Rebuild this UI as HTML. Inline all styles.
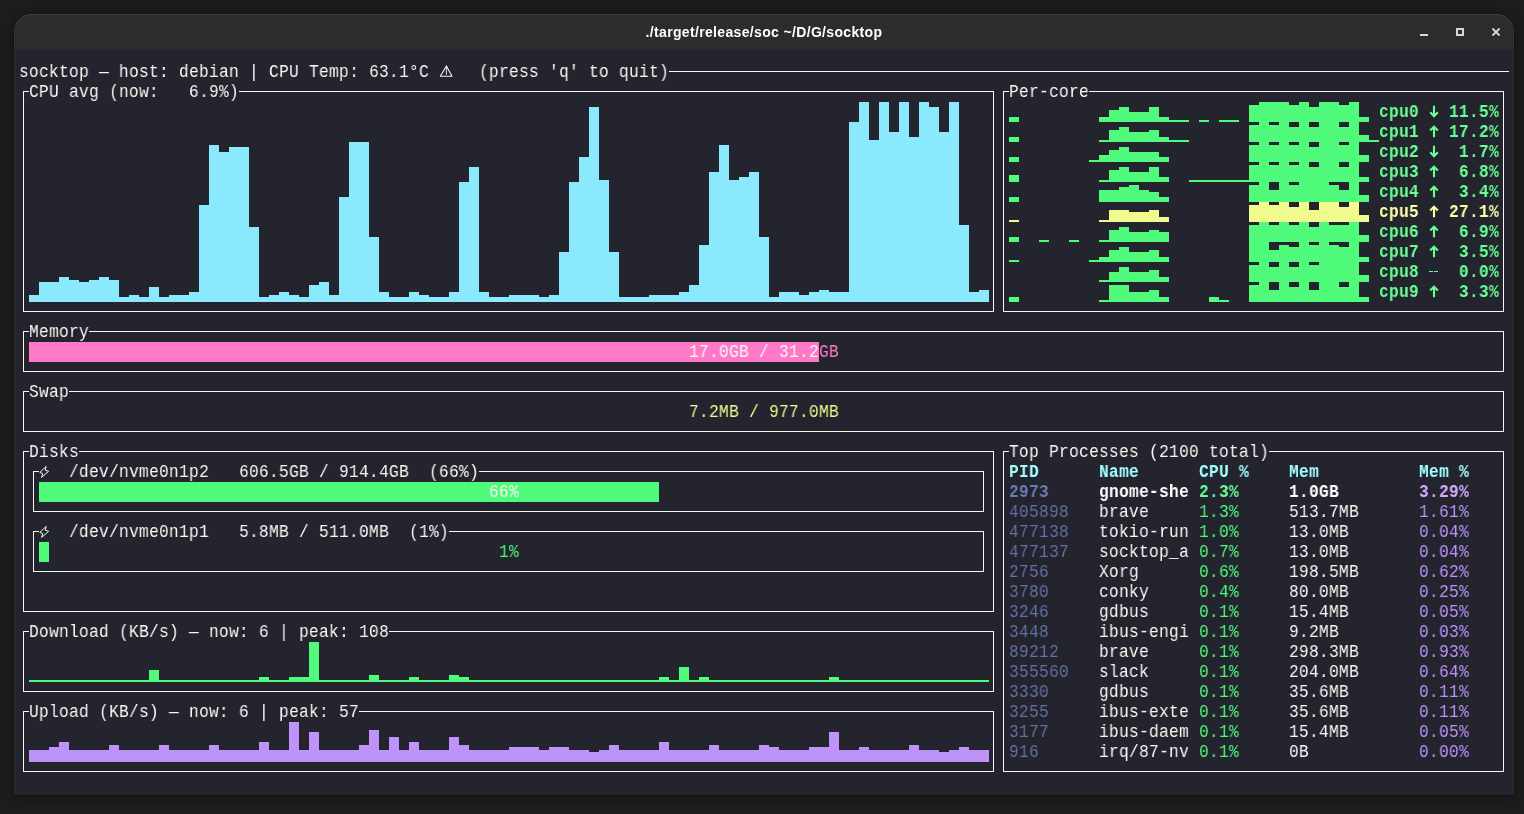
<!DOCTYPE html>
<html><head><meta charset="utf-8"><style>
html,body{margin:0;padding:0;}
body{width:1524px;height:814px;background:#1d1d1d;position:relative;overflow:hidden;}
#win{position:absolute;left:14px;top:14px;width:1500px;height:781px;border-radius:18px 18px 0 0;overflow:hidden;background:#23242e;box-shadow:0 0 0 1px rgba(0,0,0,0.18),0 2px 14px rgba(0,0,0,0.35);}
#edge{position:absolute;left:14px;top:14px;width:1500px;height:781px;border-radius:18px 18px 0 0;box-shadow:inset 1px 0 0 rgba(255,255,255,0.035),inset -1px 0 0 rgba(255,255,255,0.035),inset 0 1px 0 rgba(255,255,255,0.09);}
#tb{position:absolute;left:0;top:0;width:1500px;height:36px;background:#2c2c2c;}
#title{position:absolute;left:0;top:0;width:1500px;height:36px;line-height:36px;text-align:center;font-family:"Liberation Sans",sans-serif;font-weight:bold;font-size:14px;letter-spacing:0.34px;color:#ffffff;will-change:transform;}
.t{position:absolute;height:20px;line-height:20px;white-space:pre;font-family:"Liberation Mono",monospace;font-size:18px;letter-spacing:0.3094px;transform:translateY(0px) scaleX(0.9);transform-origin:0 0;will-change:transform;}
.b{font-weight:bold;}
svg{position:absolute;left:0;top:0;}
</style></head><body>
<div id="win"><div id="tb"><div id="title">./target/release/soc ~/D/G/socktop</div></div></div><div id="edge"></div>

<svg width="1524" height="814" shape-rendering="crispEdges"><rect x="1420" y="34" width="8" height="2" fill="#d6d6d6"/><rect x="1457" y="29" width="6" height="6" fill="none" stroke="#d6d6d6" stroke-width="2"/><g shape-rendering="geometricPrecision"><path d="M1492.5 28.5 L1499.5 35.5 M1499.5 28.5 L1492.5 35.5" stroke="#d6d6d6" stroke-width="1.8"/></g><rect x="669" y="71" width="840" height="1" fill="#f8f8f2"/><rect x="23" y="91" width="6" height="1" fill="#f8f8f2"/><rect x="239" y="91" width="755" height="1" fill="#f8f8f2"/><rect x="23" y="311" width="971" height="1" fill="#f8f8f2"/><rect x="23" y="91" width="1" height="221" fill="#f8f8f2"/><rect x="993" y="91" width="1" height="221" fill="#f8f8f2"/><rect x="29" y="295" width="10" height="7" fill="#8be9fd"/><rect x="39" y="282" width="10" height="20" fill="#8be9fd"/><rect x="49" y="282" width="10" height="20" fill="#8be9fd"/><rect x="59" y="277" width="10" height="25" fill="#8be9fd"/><rect x="69" y="280" width="10" height="22" fill="#8be9fd"/><rect x="79" y="282" width="10" height="20" fill="#8be9fd"/><rect x="89" y="280" width="10" height="22" fill="#8be9fd"/><rect x="99" y="277" width="10" height="25" fill="#8be9fd"/><rect x="109" y="280" width="10" height="22" fill="#8be9fd"/><rect x="119" y="297" width="10" height="5" fill="#8be9fd"/><rect x="129" y="295" width="10" height="7" fill="#8be9fd"/><rect x="139" y="297" width="10" height="5" fill="#8be9fd"/><rect x="149" y="287" width="10" height="15" fill="#8be9fd"/><rect x="159" y="297" width="10" height="5" fill="#8be9fd"/><rect x="169" y="295" width="10" height="7" fill="#8be9fd"/><rect x="179" y="295" width="10" height="7" fill="#8be9fd"/><rect x="189" y="292" width="10" height="10" fill="#8be9fd"/><rect x="199" y="205" width="10" height="97" fill="#8be9fd"/><rect x="209" y="145" width="10" height="157" fill="#8be9fd"/><rect x="219" y="152" width="10" height="150" fill="#8be9fd"/><rect x="229" y="147" width="10" height="155" fill="#8be9fd"/><rect x="239" y="147" width="10" height="155" fill="#8be9fd"/><rect x="249" y="227" width="10" height="75" fill="#8be9fd"/><rect x="259" y="297" width="10" height="5" fill="#8be9fd"/><rect x="269" y="295" width="10" height="7" fill="#8be9fd"/><rect x="279" y="292" width="10" height="10" fill="#8be9fd"/><rect x="289" y="295" width="10" height="7" fill="#8be9fd"/><rect x="299" y="297" width="10" height="5" fill="#8be9fd"/><rect x="309" y="285" width="10" height="17" fill="#8be9fd"/><rect x="319" y="282" width="10" height="20" fill="#8be9fd"/><rect x="329" y="295" width="10" height="7" fill="#8be9fd"/><rect x="339" y="197" width="10" height="105" fill="#8be9fd"/><rect x="349" y="142" width="10" height="160" fill="#8be9fd"/><rect x="359" y="142" width="10" height="160" fill="#8be9fd"/><rect x="369" y="237" width="10" height="65" fill="#8be9fd"/><rect x="379" y="292" width="10" height="10" fill="#8be9fd"/><rect x="389" y="297" width="10" height="5" fill="#8be9fd"/><rect x="399" y="297" width="10" height="5" fill="#8be9fd"/><rect x="409" y="292" width="10" height="10" fill="#8be9fd"/><rect x="419" y="295" width="10" height="7" fill="#8be9fd"/><rect x="429" y="297" width="10" height="5" fill="#8be9fd"/><rect x="439" y="297" width="10" height="5" fill="#8be9fd"/><rect x="449" y="292" width="10" height="10" fill="#8be9fd"/><rect x="459" y="182" width="10" height="120" fill="#8be9fd"/><rect x="469" y="167" width="10" height="135" fill="#8be9fd"/><rect x="479" y="292" width="10" height="10" fill="#8be9fd"/><rect x="489" y="297" width="10" height="5" fill="#8be9fd"/><rect x="499" y="297" width="10" height="5" fill="#8be9fd"/><rect x="509" y="295" width="10" height="7" fill="#8be9fd"/><rect x="519" y="295" width="10" height="7" fill="#8be9fd"/><rect x="529" y="295" width="10" height="7" fill="#8be9fd"/><rect x="539" y="297" width="10" height="5" fill="#8be9fd"/><rect x="549" y="295" width="10" height="7" fill="#8be9fd"/><rect x="559" y="252" width="10" height="50" fill="#8be9fd"/><rect x="569" y="182" width="10" height="120" fill="#8be9fd"/><rect x="579" y="157" width="10" height="145" fill="#8be9fd"/><rect x="589" y="107" width="10" height="195" fill="#8be9fd"/><rect x="599" y="180" width="10" height="122" fill="#8be9fd"/><rect x="609" y="252" width="10" height="50" fill="#8be9fd"/><rect x="619" y="297" width="10" height="5" fill="#8be9fd"/><rect x="629" y="297" width="10" height="5" fill="#8be9fd"/><rect x="639" y="297" width="10" height="5" fill="#8be9fd"/><rect x="649" y="295" width="10" height="7" fill="#8be9fd"/><rect x="659" y="295" width="10" height="7" fill="#8be9fd"/><rect x="669" y="295" width="10" height="7" fill="#8be9fd"/><rect x="679" y="292" width="10" height="10" fill="#8be9fd"/><rect x="689" y="285" width="10" height="17" fill="#8be9fd"/><rect x="699" y="245" width="10" height="57" fill="#8be9fd"/><rect x="709" y="172" width="10" height="130" fill="#8be9fd"/><rect x="719" y="145" width="10" height="157" fill="#8be9fd"/><rect x="729" y="180" width="10" height="122" fill="#8be9fd"/><rect x="739" y="177" width="10" height="125" fill="#8be9fd"/><rect x="749" y="172" width="10" height="130" fill="#8be9fd"/><rect x="759" y="237" width="10" height="65" fill="#8be9fd"/><rect x="769" y="297" width="10" height="5" fill="#8be9fd"/><rect x="779" y="292" width="10" height="10" fill="#8be9fd"/><rect x="789" y="292" width="10" height="10" fill="#8be9fd"/><rect x="799" y="295" width="10" height="7" fill="#8be9fd"/><rect x="809" y="292" width="10" height="10" fill="#8be9fd"/><rect x="819" y="290" width="10" height="12" fill="#8be9fd"/><rect x="829" y="292" width="10" height="10" fill="#8be9fd"/><rect x="839" y="292" width="10" height="10" fill="#8be9fd"/><rect x="849" y="122" width="10" height="180" fill="#8be9fd"/><rect x="859" y="102" width="10" height="200" fill="#8be9fd"/><rect x="869" y="140" width="10" height="162" fill="#8be9fd"/><rect x="879" y="102" width="10" height="200" fill="#8be9fd"/><rect x="889" y="132" width="10" height="170" fill="#8be9fd"/><rect x="899" y="102" width="10" height="200" fill="#8be9fd"/><rect x="909" y="137" width="10" height="165" fill="#8be9fd"/><rect x="919" y="102" width="10" height="200" fill="#8be9fd"/><rect x="929" y="107" width="10" height="195" fill="#8be9fd"/><rect x="939" y="132" width="10" height="170" fill="#8be9fd"/><rect x="949" y="102" width="10" height="200" fill="#8be9fd"/><rect x="959" y="225" width="10" height="77" fill="#8be9fd"/><rect x="969" y="292" width="10" height="10" fill="#8be9fd"/><rect x="979" y="290" width="10" height="12" fill="#8be9fd"/><rect x="1003" y="91" width="6" height="1" fill="#f8f8f2"/><rect x="1089" y="91" width="415" height="1" fill="#f8f8f2"/><rect x="1003" y="311" width="501" height="1" fill="#f8f8f2"/><rect x="1003" y="91" width="1" height="221" fill="#f8f8f2"/><rect x="1503" y="91" width="1" height="221" fill="#f8f8f2"/><rect x="1009" y="117" width="10" height="5" fill="#50fa7b"/><rect x="1099" y="117" width="10" height="5" fill="#50fa7b"/><rect x="1109" y="110" width="10" height="12" fill="#50fa7b"/><rect x="1119" y="107" width="10" height="15" fill="#50fa7b"/><rect x="1129" y="112" width="10" height="10" fill="#50fa7b"/><rect x="1139" y="112" width="10" height="10" fill="#50fa7b"/><rect x="1149" y="107" width="10" height="15" fill="#50fa7b"/><rect x="1159" y="117" width="10" height="5" fill="#50fa7b"/><rect x="1169" y="120" width="10" height="2" fill="#50fa7b"/><rect x="1179" y="120" width="10" height="2" fill="#50fa7b"/><rect x="1199" y="120" width="10" height="2" fill="#50fa7b"/><rect x="1219" y="120" width="10" height="2" fill="#50fa7b"/><rect x="1229" y="120" width="10" height="2" fill="#50fa7b"/><rect x="1249" y="105" width="10" height="17" fill="#50fa7b"/><rect x="1259" y="102" width="10" height="20" fill="#50fa7b"/><rect x="1269" y="102" width="10" height="20" fill="#50fa7b"/><rect x="1279" y="102" width="10" height="20" fill="#50fa7b"/><rect x="1289" y="105" width="10" height="17" fill="#50fa7b"/><rect x="1299" y="102" width="10" height="20" fill="#50fa7b"/><rect x="1309" y="107" width="10" height="15" fill="#50fa7b"/><rect x="1319" y="102" width="10" height="20" fill="#50fa7b"/><rect x="1329" y="102" width="10" height="20" fill="#50fa7b"/><rect x="1339" y="105" width="10" height="17" fill="#50fa7b"/><rect x="1349" y="102" width="10" height="20" fill="#50fa7b"/><rect x="1359" y="117" width="10" height="5" fill="#50fa7b"/><rect x="1009" y="137" width="10" height="5" fill="#50fa7b"/><rect x="1099" y="140" width="10" height="2" fill="#50fa7b"/><rect x="1109" y="130" width="10" height="12" fill="#50fa7b"/><rect x="1119" y="127" width="10" height="15" fill="#50fa7b"/><rect x="1129" y="132" width="10" height="10" fill="#50fa7b"/><rect x="1139" y="132" width="10" height="10" fill="#50fa7b"/><rect x="1149" y="130" width="10" height="12" fill="#50fa7b"/><rect x="1159" y="137" width="10" height="5" fill="#50fa7b"/><rect x="1169" y="140" width="10" height="2" fill="#50fa7b"/><rect x="1179" y="140" width="10" height="2" fill="#50fa7b"/><rect x="1249" y="125" width="10" height="17" fill="#50fa7b"/><rect x="1259" y="122" width="10" height="20" fill="#50fa7b"/><rect x="1269" y="125" width="10" height="17" fill="#50fa7b"/><rect x="1279" y="122" width="10" height="20" fill="#50fa7b"/><rect x="1289" y="127" width="10" height="15" fill="#50fa7b"/><rect x="1299" y="122" width="10" height="20" fill="#50fa7b"/><rect x="1309" y="127" width="10" height="15" fill="#50fa7b"/><rect x="1319" y="122" width="10" height="20" fill="#50fa7b"/><rect x="1329" y="122" width="10" height="20" fill="#50fa7b"/><rect x="1339" y="127" width="10" height="15" fill="#50fa7b"/><rect x="1349" y="122" width="10" height="20" fill="#50fa7b"/><rect x="1359" y="135" width="10" height="7" fill="#50fa7b"/><rect x="1369" y="140" width="10" height="2" fill="#50fa7b"/><rect x="1009" y="157" width="10" height="5" fill="#50fa7b"/><rect x="1089" y="160" width="10" height="2" fill="#50fa7b"/><rect x="1099" y="155" width="10" height="7" fill="#50fa7b"/><rect x="1109" y="150" width="10" height="12" fill="#50fa7b"/><rect x="1119" y="147" width="10" height="15" fill="#50fa7b"/><rect x="1129" y="152" width="10" height="10" fill="#50fa7b"/><rect x="1139" y="152" width="10" height="10" fill="#50fa7b"/><rect x="1149" y="152" width="10" height="10" fill="#50fa7b"/><rect x="1159" y="157" width="10" height="5" fill="#50fa7b"/><rect x="1249" y="145" width="10" height="17" fill="#50fa7b"/><rect x="1259" y="142" width="10" height="20" fill="#50fa7b"/><rect x="1269" y="145" width="10" height="17" fill="#50fa7b"/><rect x="1279" y="142" width="10" height="20" fill="#50fa7b"/><rect x="1289" y="145" width="10" height="17" fill="#50fa7b"/><rect x="1299" y="142" width="10" height="20" fill="#50fa7b"/><rect x="1309" y="147" width="10" height="15" fill="#50fa7b"/><rect x="1319" y="142" width="10" height="20" fill="#50fa7b"/><rect x="1329" y="142" width="10" height="20" fill="#50fa7b"/><rect x="1339" y="145" width="10" height="17" fill="#50fa7b"/><rect x="1349" y="142" width="10" height="20" fill="#50fa7b"/><rect x="1359" y="155" width="10" height="7" fill="#50fa7b"/><rect x="1009" y="175" width="10" height="7" fill="#50fa7b"/><rect x="1099" y="180" width="10" height="2" fill="#50fa7b"/><rect x="1109" y="170" width="10" height="12" fill="#50fa7b"/><rect x="1119" y="167" width="10" height="15" fill="#50fa7b"/><rect x="1129" y="172" width="10" height="10" fill="#50fa7b"/><rect x="1139" y="172" width="10" height="10" fill="#50fa7b"/><rect x="1149" y="167" width="10" height="15" fill="#50fa7b"/><rect x="1159" y="177" width="10" height="5" fill="#50fa7b"/><rect x="1189" y="180" width="10" height="2" fill="#50fa7b"/><rect x="1199" y="180" width="10" height="2" fill="#50fa7b"/><rect x="1209" y="180" width="10" height="2" fill="#50fa7b"/><rect x="1219" y="180" width="10" height="2" fill="#50fa7b"/><rect x="1229" y="180" width="10" height="2" fill="#50fa7b"/><rect x="1239" y="180" width="10" height="2" fill="#50fa7b"/><rect x="1249" y="165" width="10" height="17" fill="#50fa7b"/><rect x="1259" y="162" width="10" height="20" fill="#50fa7b"/><rect x="1269" y="165" width="10" height="17" fill="#50fa7b"/><rect x="1279" y="162" width="10" height="20" fill="#50fa7b"/><rect x="1289" y="165" width="10" height="17" fill="#50fa7b"/><rect x="1299" y="162" width="10" height="20" fill="#50fa7b"/><rect x="1309" y="167" width="10" height="15" fill="#50fa7b"/><rect x="1319" y="162" width="10" height="20" fill="#50fa7b"/><rect x="1329" y="162" width="10" height="20" fill="#50fa7b"/><rect x="1339" y="167" width="10" height="15" fill="#50fa7b"/><rect x="1349" y="162" width="10" height="20" fill="#50fa7b"/><rect x="1359" y="177" width="10" height="5" fill="#50fa7b"/><rect x="1009" y="197" width="10" height="5" fill="#50fa7b"/><rect x="1099" y="190" width="10" height="12" fill="#50fa7b"/><rect x="1109" y="190" width="10" height="12" fill="#50fa7b"/><rect x="1119" y="187" width="10" height="15" fill="#50fa7b"/><rect x="1129" y="185" width="10" height="17" fill="#50fa7b"/><rect x="1139" y="190" width="10" height="12" fill="#50fa7b"/><rect x="1149" y="192" width="10" height="10" fill="#50fa7b"/><rect x="1159" y="197" width="10" height="5" fill="#50fa7b"/><rect x="1249" y="185" width="10" height="17" fill="#50fa7b"/><rect x="1259" y="182" width="10" height="20" fill="#50fa7b"/><rect x="1269" y="190" width="10" height="12" fill="#50fa7b"/><rect x="1279" y="182" width="10" height="20" fill="#50fa7b"/><rect x="1289" y="185" width="10" height="17" fill="#50fa7b"/><rect x="1299" y="182" width="10" height="20" fill="#50fa7b"/><rect x="1309" y="182" width="10" height="20" fill="#50fa7b"/><rect x="1319" y="182" width="10" height="20" fill="#50fa7b"/><rect x="1329" y="185" width="10" height="17" fill="#50fa7b"/><rect x="1339" y="190" width="10" height="12" fill="#50fa7b"/><rect x="1349" y="182" width="10" height="20" fill="#50fa7b"/><rect x="1359" y="195" width="10" height="7" fill="#50fa7b"/><rect x="1009" y="220" width="10" height="2" fill="#f1fa8c"/><rect x="1099" y="220" width="10" height="2" fill="#f1fa8c"/><rect x="1109" y="210" width="10" height="12" fill="#f1fa8c"/><rect x="1119" y="210" width="10" height="12" fill="#f1fa8c"/><rect x="1129" y="212" width="10" height="10" fill="#f1fa8c"/><rect x="1139" y="212" width="10" height="10" fill="#f1fa8c"/><rect x="1149" y="210" width="10" height="12" fill="#f1fa8c"/><rect x="1159" y="217" width="10" height="5" fill="#f1fa8c"/><rect x="1249" y="205" width="10" height="17" fill="#f1fa8c"/><rect x="1259" y="202" width="10" height="20" fill="#f1fa8c"/><rect x="1269" y="205" width="10" height="17" fill="#f1fa8c"/><rect x="1279" y="202" width="10" height="20" fill="#f1fa8c"/><rect x="1289" y="207" width="10" height="15" fill="#f1fa8c"/><rect x="1299" y="202" width="10" height="20" fill="#f1fa8c"/><rect x="1309" y="210" width="10" height="12" fill="#f1fa8c"/><rect x="1319" y="202" width="10" height="20" fill="#f1fa8c"/><rect x="1329" y="202" width="10" height="20" fill="#f1fa8c"/><rect x="1339" y="207" width="10" height="15" fill="#f1fa8c"/><rect x="1349" y="202" width="10" height="20" fill="#f1fa8c"/><rect x="1359" y="215" width="10" height="7" fill="#f1fa8c"/><rect x="1009" y="237" width="10" height="5" fill="#50fa7b"/><rect x="1039" y="240" width="10" height="2" fill="#50fa7b"/><rect x="1069" y="240" width="10" height="2" fill="#50fa7b"/><rect x="1099" y="240" width="10" height="2" fill="#50fa7b"/><rect x="1109" y="230" width="10" height="12" fill="#50fa7b"/><rect x="1119" y="227" width="10" height="15" fill="#50fa7b"/><rect x="1129" y="232" width="10" height="10" fill="#50fa7b"/><rect x="1139" y="232" width="10" height="10" fill="#50fa7b"/><rect x="1149" y="230" width="10" height="12" fill="#50fa7b"/><rect x="1159" y="232" width="10" height="10" fill="#50fa7b"/><rect x="1249" y="225" width="10" height="17" fill="#50fa7b"/><rect x="1259" y="222" width="10" height="20" fill="#50fa7b"/><rect x="1269" y="225" width="10" height="17" fill="#50fa7b"/><rect x="1279" y="222" width="10" height="20" fill="#50fa7b"/><rect x="1289" y="225" width="10" height="17" fill="#50fa7b"/><rect x="1299" y="222" width="10" height="20" fill="#50fa7b"/><rect x="1309" y="227" width="10" height="15" fill="#50fa7b"/><rect x="1319" y="222" width="10" height="20" fill="#50fa7b"/><rect x="1329" y="225" width="10" height="17" fill="#50fa7b"/><rect x="1339" y="225" width="10" height="17" fill="#50fa7b"/><rect x="1349" y="222" width="10" height="20" fill="#50fa7b"/><rect x="1359" y="235" width="10" height="7" fill="#50fa7b"/><rect x="1009" y="260" width="10" height="2" fill="#50fa7b"/><rect x="1089" y="260" width="10" height="2" fill="#50fa7b"/><rect x="1099" y="257" width="10" height="5" fill="#50fa7b"/><rect x="1109" y="250" width="10" height="12" fill="#50fa7b"/><rect x="1119" y="247" width="10" height="15" fill="#50fa7b"/><rect x="1129" y="252" width="10" height="10" fill="#50fa7b"/><rect x="1139" y="252" width="10" height="10" fill="#50fa7b"/><rect x="1149" y="250" width="10" height="12" fill="#50fa7b"/><rect x="1159" y="257" width="10" height="5" fill="#50fa7b"/><rect x="1249" y="242" width="10" height="20" fill="#50fa7b"/><rect x="1259" y="242" width="10" height="20" fill="#50fa7b"/><rect x="1269" y="250" width="10" height="12" fill="#50fa7b"/><rect x="1279" y="245" width="10" height="17" fill="#50fa7b"/><rect x="1289" y="247" width="10" height="15" fill="#50fa7b"/><rect x="1299" y="242" width="10" height="20" fill="#50fa7b"/><rect x="1309" y="245" width="10" height="17" fill="#50fa7b"/><rect x="1319" y="242" width="10" height="20" fill="#50fa7b"/><rect x="1329" y="245" width="10" height="17" fill="#50fa7b"/><rect x="1339" y="247" width="10" height="15" fill="#50fa7b"/><rect x="1349" y="242" width="10" height="20" fill="#50fa7b"/><rect x="1359" y="257" width="10" height="5" fill="#50fa7b"/><rect x="1099" y="280" width="10" height="2" fill="#50fa7b"/><rect x="1109" y="272" width="10" height="10" fill="#50fa7b"/><rect x="1119" y="267" width="10" height="15" fill="#50fa7b"/><rect x="1129" y="272" width="10" height="10" fill="#50fa7b"/><rect x="1139" y="272" width="10" height="10" fill="#50fa7b"/><rect x="1149" y="270" width="10" height="12" fill="#50fa7b"/><rect x="1159" y="277" width="10" height="5" fill="#50fa7b"/><rect x="1249" y="265" width="10" height="17" fill="#50fa7b"/><rect x="1259" y="262" width="10" height="20" fill="#50fa7b"/><rect x="1269" y="267" width="10" height="15" fill="#50fa7b"/><rect x="1279" y="262" width="10" height="20" fill="#50fa7b"/><rect x="1289" y="267" width="10" height="15" fill="#50fa7b"/><rect x="1299" y="262" width="10" height="20" fill="#50fa7b"/><rect x="1309" y="265" width="10" height="17" fill="#50fa7b"/><rect x="1319" y="262" width="10" height="20" fill="#50fa7b"/><rect x="1329" y="262" width="10" height="20" fill="#50fa7b"/><rect x="1339" y="262" width="10" height="20" fill="#50fa7b"/><rect x="1349" y="262" width="10" height="20" fill="#50fa7b"/><rect x="1359" y="275" width="10" height="7" fill="#50fa7b"/><rect x="1429" y="271" width="4" height="1" fill="#69ff94"/><rect x="1434" y="271" width="4" height="1" fill="#69ff94"/><rect x="1009" y="297" width="10" height="5" fill="#50fa7b"/><rect x="1099" y="300" width="10" height="2" fill="#50fa7b"/><rect x="1109" y="285" width="10" height="17" fill="#50fa7b"/><rect x="1119" y="285" width="10" height="17" fill="#50fa7b"/><rect x="1129" y="292" width="10" height="10" fill="#50fa7b"/><rect x="1139" y="292" width="10" height="10" fill="#50fa7b"/><rect x="1149" y="290" width="10" height="12" fill="#50fa7b"/><rect x="1159" y="297" width="10" height="5" fill="#50fa7b"/><rect x="1209" y="297" width="10" height="5" fill="#50fa7b"/><rect x="1219" y="300" width="10" height="2" fill="#50fa7b"/><rect x="1249" y="285" width="10" height="17" fill="#50fa7b"/><rect x="1259" y="282" width="10" height="20" fill="#50fa7b"/><rect x="1269" y="290" width="10" height="12" fill="#50fa7b"/><rect x="1279" y="282" width="10" height="20" fill="#50fa7b"/><rect x="1289" y="287" width="10" height="15" fill="#50fa7b"/><rect x="1299" y="282" width="10" height="20" fill="#50fa7b"/><rect x="1309" y="290" width="10" height="12" fill="#50fa7b"/><rect x="1319" y="282" width="10" height="20" fill="#50fa7b"/><rect x="1329" y="282" width="10" height="20" fill="#50fa7b"/><rect x="1339" y="287" width="10" height="15" fill="#50fa7b"/><rect x="1349" y="282" width="10" height="20" fill="#50fa7b"/><rect x="1359" y="297" width="10" height="5" fill="#50fa7b"/><rect x="23" y="331" width="6" height="1" fill="#f8f8f2"/><rect x="89" y="331" width="1415" height="1" fill="#f8f8f2"/><rect x="23" y="371" width="1481" height="1" fill="#f8f8f2"/><rect x="23" y="331" width="1" height="41" fill="#f8f8f2"/><rect x="1503" y="331" width="1" height="41" fill="#f8f8f2"/><rect x="29" y="342" width="790" height="20" fill="#ff79c6"/><rect x="23" y="391" width="6" height="1" fill="#f8f8f2"/><rect x="69" y="391" width="1435" height="1" fill="#f8f8f2"/><rect x="23" y="431" width="1481" height="1" fill="#f8f8f2"/><rect x="23" y="391" width="1" height="41" fill="#f8f8f2"/><rect x="1503" y="391" width="1" height="41" fill="#f8f8f2"/><rect x="23" y="451" width="6" height="1" fill="#f8f8f2"/><rect x="79" y="451" width="915" height="1" fill="#f8f8f2"/><rect x="23" y="611" width="971" height="1" fill="#f8f8f2"/><rect x="23" y="451" width="1" height="161" fill="#f8f8f2"/><rect x="993" y="451" width="1" height="161" fill="#f8f8f2"/><rect x="33" y="471" width="6" height="1" fill="#f8f8f2"/><rect x="479" y="471" width="505" height="1" fill="#f8f8f2"/><rect x="33" y="511" width="951" height="1" fill="#f8f8f2"/><rect x="33" y="471" width="1" height="41" fill="#f8f8f2"/><rect x="983" y="471" width="1" height="41" fill="#f8f8f2"/><rect x="33" y="531" width="6" height="1" fill="#f8f8f2"/><rect x="449" y="531" width="535" height="1" fill="#f8f8f2"/><rect x="33" y="571" width="951" height="1" fill="#f8f8f2"/><rect x="33" y="531" width="1" height="41" fill="#f8f8f2"/><rect x="983" y="531" width="1" height="41" fill="#f8f8f2"/><rect x="39" y="482" width="620" height="20" fill="#50fa7b"/><rect x="39" y="542" width="10" height="20" fill="#50fa7b"/><rect x="23" y="631" width="6" height="1" fill="#f8f8f2"/><rect x="389" y="631" width="605" height="1" fill="#f8f8f2"/><rect x="23" y="691" width="971" height="1" fill="#f8f8f2"/><rect x="23" y="631" width="1" height="61" fill="#f8f8f2"/><rect x="993" y="631" width="1" height="61" fill="#f8f8f2"/><rect x="29" y="680" width="10" height="2" fill="#50fa7b"/><rect x="39" y="680" width="10" height="2" fill="#50fa7b"/><rect x="49" y="680" width="10" height="2" fill="#50fa7b"/><rect x="59" y="680" width="10" height="2" fill="#50fa7b"/><rect x="69" y="680" width="10" height="2" fill="#50fa7b"/><rect x="79" y="680" width="10" height="2" fill="#50fa7b"/><rect x="89" y="680" width="10" height="2" fill="#50fa7b"/><rect x="99" y="680" width="10" height="2" fill="#50fa7b"/><rect x="109" y="680" width="10" height="2" fill="#50fa7b"/><rect x="119" y="680" width="10" height="2" fill="#50fa7b"/><rect x="129" y="680" width="10" height="2" fill="#50fa7b"/><rect x="139" y="680" width="10" height="2" fill="#50fa7b"/><rect x="149" y="670" width="10" height="12" fill="#50fa7b"/><rect x="159" y="680" width="10" height="2" fill="#50fa7b"/><rect x="169" y="680" width="10" height="2" fill="#50fa7b"/><rect x="179" y="680" width="10" height="2" fill="#50fa7b"/><rect x="189" y="680" width="10" height="2" fill="#50fa7b"/><rect x="199" y="680" width="10" height="2" fill="#50fa7b"/><rect x="209" y="680" width="10" height="2" fill="#50fa7b"/><rect x="219" y="680" width="10" height="2" fill="#50fa7b"/><rect x="229" y="680" width="10" height="2" fill="#50fa7b"/><rect x="239" y="680" width="10" height="2" fill="#50fa7b"/><rect x="249" y="680" width="10" height="2" fill="#50fa7b"/><rect x="259" y="677" width="10" height="5" fill="#50fa7b"/><rect x="269" y="680" width="10" height="2" fill="#50fa7b"/><rect x="279" y="680" width="10" height="2" fill="#50fa7b"/><rect x="289" y="677" width="10" height="5" fill="#50fa7b"/><rect x="299" y="677" width="10" height="5" fill="#50fa7b"/><rect x="309" y="642" width="10" height="40" fill="#50fa7b"/><rect x="319" y="680" width="10" height="2" fill="#50fa7b"/><rect x="329" y="680" width="10" height="2" fill="#50fa7b"/><rect x="339" y="680" width="10" height="2" fill="#50fa7b"/><rect x="349" y="680" width="10" height="2" fill="#50fa7b"/><rect x="359" y="680" width="10" height="2" fill="#50fa7b"/><rect x="369" y="675" width="10" height="7" fill="#50fa7b"/><rect x="379" y="680" width="10" height="2" fill="#50fa7b"/><rect x="389" y="680" width="10" height="2" fill="#50fa7b"/><rect x="399" y="680" width="10" height="2" fill="#50fa7b"/><rect x="409" y="677" width="10" height="5" fill="#50fa7b"/><rect x="419" y="680" width="10" height="2" fill="#50fa7b"/><rect x="429" y="680" width="10" height="2" fill="#50fa7b"/><rect x="439" y="680" width="10" height="2" fill="#50fa7b"/><rect x="449" y="675" width="10" height="7" fill="#50fa7b"/><rect x="459" y="677" width="10" height="5" fill="#50fa7b"/><rect x="469" y="680" width="10" height="2" fill="#50fa7b"/><rect x="479" y="680" width="10" height="2" fill="#50fa7b"/><rect x="489" y="680" width="10" height="2" fill="#50fa7b"/><rect x="499" y="680" width="10" height="2" fill="#50fa7b"/><rect x="509" y="680" width="10" height="2" fill="#50fa7b"/><rect x="519" y="680" width="10" height="2" fill="#50fa7b"/><rect x="529" y="680" width="10" height="2" fill="#50fa7b"/><rect x="539" y="680" width="10" height="2" fill="#50fa7b"/><rect x="549" y="680" width="10" height="2" fill="#50fa7b"/><rect x="559" y="680" width="10" height="2" fill="#50fa7b"/><rect x="569" y="680" width="10" height="2" fill="#50fa7b"/><rect x="579" y="680" width="10" height="2" fill="#50fa7b"/><rect x="589" y="680" width="10" height="2" fill="#50fa7b"/><rect x="599" y="680" width="10" height="2" fill="#50fa7b"/><rect x="609" y="680" width="10" height="2" fill="#50fa7b"/><rect x="619" y="680" width="10" height="2" fill="#50fa7b"/><rect x="629" y="680" width="10" height="2" fill="#50fa7b"/><rect x="639" y="680" width="10" height="2" fill="#50fa7b"/><rect x="649" y="680" width="10" height="2" fill="#50fa7b"/><rect x="659" y="677" width="10" height="5" fill="#50fa7b"/><rect x="669" y="680" width="10" height="2" fill="#50fa7b"/><rect x="679" y="667" width="10" height="15" fill="#50fa7b"/><rect x="689" y="680" width="10" height="2" fill="#50fa7b"/><rect x="699" y="677" width="10" height="5" fill="#50fa7b"/><rect x="709" y="680" width="10" height="2" fill="#50fa7b"/><rect x="719" y="680" width="10" height="2" fill="#50fa7b"/><rect x="729" y="680" width="10" height="2" fill="#50fa7b"/><rect x="739" y="680" width="10" height="2" fill="#50fa7b"/><rect x="749" y="680" width="10" height="2" fill="#50fa7b"/><rect x="759" y="680" width="10" height="2" fill="#50fa7b"/><rect x="769" y="680" width="10" height="2" fill="#50fa7b"/><rect x="779" y="680" width="10" height="2" fill="#50fa7b"/><rect x="789" y="680" width="10" height="2" fill="#50fa7b"/><rect x="799" y="680" width="10" height="2" fill="#50fa7b"/><rect x="809" y="680" width="10" height="2" fill="#50fa7b"/><rect x="819" y="680" width="10" height="2" fill="#50fa7b"/><rect x="829" y="677" width="10" height="5" fill="#50fa7b"/><rect x="839" y="680" width="10" height="2" fill="#50fa7b"/><rect x="849" y="680" width="10" height="2" fill="#50fa7b"/><rect x="859" y="680" width="10" height="2" fill="#50fa7b"/><rect x="869" y="680" width="10" height="2" fill="#50fa7b"/><rect x="879" y="680" width="10" height="2" fill="#50fa7b"/><rect x="889" y="680" width="10" height="2" fill="#50fa7b"/><rect x="899" y="680" width="10" height="2" fill="#50fa7b"/><rect x="909" y="680" width="10" height="2" fill="#50fa7b"/><rect x="919" y="680" width="10" height="2" fill="#50fa7b"/><rect x="929" y="680" width="10" height="2" fill="#50fa7b"/><rect x="939" y="680" width="10" height="2" fill="#50fa7b"/><rect x="949" y="680" width="10" height="2" fill="#50fa7b"/><rect x="959" y="680" width="10" height="2" fill="#50fa7b"/><rect x="969" y="680" width="10" height="2" fill="#50fa7b"/><rect x="979" y="680" width="10" height="2" fill="#50fa7b"/><rect x="23" y="711" width="6" height="1" fill="#f8f8f2"/><rect x="359" y="711" width="635" height="1" fill="#f8f8f2"/><rect x="23" y="771" width="971" height="1" fill="#f8f8f2"/><rect x="23" y="711" width="1" height="61" fill="#f8f8f2"/><rect x="993" y="711" width="1" height="61" fill="#f8f8f2"/><rect x="29" y="750" width="10" height="12" fill="#bd93f9"/><rect x="39" y="750" width="10" height="12" fill="#bd93f9"/><rect x="49" y="747" width="10" height="15" fill="#bd93f9"/><rect x="59" y="742" width="10" height="20" fill="#bd93f9"/><rect x="69" y="750" width="10" height="12" fill="#bd93f9"/><rect x="79" y="750" width="10" height="12" fill="#bd93f9"/><rect x="89" y="750" width="10" height="12" fill="#bd93f9"/><rect x="99" y="750" width="10" height="12" fill="#bd93f9"/><rect x="109" y="745" width="10" height="17" fill="#bd93f9"/><rect x="119" y="750" width="10" height="12" fill="#bd93f9"/><rect x="129" y="750" width="10" height="12" fill="#bd93f9"/><rect x="139" y="750" width="10" height="12" fill="#bd93f9"/><rect x="149" y="750" width="10" height="12" fill="#bd93f9"/><rect x="159" y="745" width="10" height="17" fill="#bd93f9"/><rect x="169" y="750" width="10" height="12" fill="#bd93f9"/><rect x="179" y="750" width="10" height="12" fill="#bd93f9"/><rect x="189" y="750" width="10" height="12" fill="#bd93f9"/><rect x="199" y="750" width="10" height="12" fill="#bd93f9"/><rect x="209" y="745" width="10" height="17" fill="#bd93f9"/><rect x="219" y="750" width="10" height="12" fill="#bd93f9"/><rect x="229" y="750" width="10" height="12" fill="#bd93f9"/><rect x="239" y="750" width="10" height="12" fill="#bd93f9"/><rect x="249" y="750" width="10" height="12" fill="#bd93f9"/><rect x="259" y="742" width="10" height="20" fill="#bd93f9"/><rect x="269" y="750" width="10" height="12" fill="#bd93f9"/><rect x="279" y="750" width="10" height="12" fill="#bd93f9"/><rect x="289" y="722" width="10" height="40" fill="#bd93f9"/><rect x="299" y="750" width="10" height="12" fill="#bd93f9"/><rect x="309" y="732" width="10" height="30" fill="#bd93f9"/><rect x="319" y="750" width="10" height="12" fill="#bd93f9"/><rect x="329" y="750" width="10" height="12" fill="#bd93f9"/><rect x="339" y="750" width="10" height="12" fill="#bd93f9"/><rect x="349" y="750" width="10" height="12" fill="#bd93f9"/><rect x="359" y="745" width="10" height="17" fill="#bd93f9"/><rect x="369" y="730" width="10" height="32" fill="#bd93f9"/><rect x="379" y="750" width="10" height="12" fill="#bd93f9"/><rect x="389" y="737" width="10" height="25" fill="#bd93f9"/><rect x="399" y="750" width="10" height="12" fill="#bd93f9"/><rect x="409" y="742" width="10" height="20" fill="#bd93f9"/><rect x="419" y="750" width="10" height="12" fill="#bd93f9"/><rect x="429" y="750" width="10" height="12" fill="#bd93f9"/><rect x="439" y="750" width="10" height="12" fill="#bd93f9"/><rect x="449" y="737" width="10" height="25" fill="#bd93f9"/><rect x="459" y="745" width="10" height="17" fill="#bd93f9"/><rect x="469" y="750" width="10" height="12" fill="#bd93f9"/><rect x="479" y="750" width="10" height="12" fill="#bd93f9"/><rect x="489" y="750" width="10" height="12" fill="#bd93f9"/><rect x="499" y="750" width="10" height="12" fill="#bd93f9"/><rect x="509" y="747" width="10" height="15" fill="#bd93f9"/><rect x="519" y="747" width="10" height="15" fill="#bd93f9"/><rect x="529" y="747" width="10" height="15" fill="#bd93f9"/><rect x="539" y="750" width="10" height="12" fill="#bd93f9"/><rect x="549" y="747" width="10" height="15" fill="#bd93f9"/><rect x="559" y="747" width="10" height="15" fill="#bd93f9"/><rect x="569" y="750" width="10" height="12" fill="#bd93f9"/><rect x="579" y="750" width="10" height="12" fill="#bd93f9"/><rect x="589" y="752" width="10" height="10" fill="#bd93f9"/><rect x="599" y="750" width="10" height="12" fill="#bd93f9"/><rect x="609" y="745" width="10" height="17" fill="#bd93f9"/><rect x="619" y="750" width="10" height="12" fill="#bd93f9"/><rect x="629" y="750" width="10" height="12" fill="#bd93f9"/><rect x="639" y="750" width="10" height="12" fill="#bd93f9"/><rect x="649" y="750" width="10" height="12" fill="#bd93f9"/><rect x="659" y="742" width="10" height="20" fill="#bd93f9"/><rect x="669" y="750" width="10" height="12" fill="#bd93f9"/><rect x="679" y="750" width="10" height="12" fill="#bd93f9"/><rect x="689" y="750" width="10" height="12" fill="#bd93f9"/><rect x="699" y="750" width="10" height="12" fill="#bd93f9"/><rect x="709" y="745" width="10" height="17" fill="#bd93f9"/><rect x="719" y="750" width="10" height="12" fill="#bd93f9"/><rect x="729" y="750" width="10" height="12" fill="#bd93f9"/><rect x="739" y="750" width="10" height="12" fill="#bd93f9"/><rect x="749" y="750" width="10" height="12" fill="#bd93f9"/><rect x="759" y="745" width="10" height="17" fill="#bd93f9"/><rect x="769" y="747" width="10" height="15" fill="#bd93f9"/><rect x="779" y="750" width="10" height="12" fill="#bd93f9"/><rect x="789" y="750" width="10" height="12" fill="#bd93f9"/><rect x="799" y="750" width="10" height="12" fill="#bd93f9"/><rect x="809" y="747" width="10" height="15" fill="#bd93f9"/><rect x="819" y="747" width="10" height="15" fill="#bd93f9"/><rect x="829" y="732" width="10" height="30" fill="#bd93f9"/><rect x="839" y="750" width="10" height="12" fill="#bd93f9"/><rect x="849" y="750" width="10" height="12" fill="#bd93f9"/><rect x="859" y="747" width="10" height="15" fill="#bd93f9"/><rect x="869" y="750" width="10" height="12" fill="#bd93f9"/><rect x="879" y="750" width="10" height="12" fill="#bd93f9"/><rect x="889" y="750" width="10" height="12" fill="#bd93f9"/><rect x="899" y="750" width="10" height="12" fill="#bd93f9"/><rect x="909" y="745" width="10" height="17" fill="#bd93f9"/><rect x="919" y="750" width="10" height="12" fill="#bd93f9"/><rect x="929" y="750" width="10" height="12" fill="#bd93f9"/><rect x="939" y="752" width="10" height="10" fill="#bd93f9"/><rect x="949" y="750" width="10" height="12" fill="#bd93f9"/><rect x="959" y="747" width="10" height="15" fill="#bd93f9"/><rect x="969" y="750" width="10" height="12" fill="#bd93f9"/><rect x="979" y="750" width="10" height="12" fill="#bd93f9"/><rect x="1003" y="451" width="6" height="1" fill="#f8f8f2"/><rect x="1269" y="451" width="235" height="1" fill="#f8f8f2"/><rect x="1003" y="771" width="501" height="1" fill="#f8f8f2"/><rect x="1003" y="451" width="1" height="321" fill="#f8f8f2"/><rect x="1503" y="451" width="1" height="321" fill="#f8f8f2"/><g shape-rendering="geometricPrecision"><path d="M1434 105.8 V116.5 M1430.2 112.2 L1434 116.2 L1437.8 112.2" fill="none" stroke="#69ff94" stroke-width="2.1"/><path d="M1434 137.2 V126.5 M1430.2 130.5 L1434 126.7 L1437.8 130.5" fill="none" stroke="#69ff94" stroke-width="2.1"/><path d="M1434 145.8 V156.5 M1430.2 152.2 L1434 156.2 L1437.8 152.2" fill="none" stroke="#69ff94" stroke-width="2.1"/><path d="M1434 177.2 V166.5 M1430.2 170.5 L1434 166.7 L1437.8 170.5" fill="none" stroke="#69ff94" stroke-width="2.1"/><path d="M1434 197.2 V186.5 M1430.2 190.5 L1434 186.7 L1437.8 190.5" fill="none" stroke="#69ff94" stroke-width="2.1"/><path d="M1434 217.2 V206.5 M1430.2 210.5 L1434 206.7 L1437.8 210.5" fill="none" stroke="#ffffa5" stroke-width="2.1"/><path d="M1434 237.2 V226.5 M1430.2 230.5 L1434 226.7 L1437.8 230.5" fill="none" stroke="#69ff94" stroke-width="2.1"/><path d="M1434 257.2 V246.5 M1430.2 250.5 L1434 246.7 L1437.8 250.5" fill="none" stroke="#69ff94" stroke-width="2.1"/><path d="M1434 297.2 V286.5 M1430.2 290.5 L1434 286.7 L1437.8 290.5" fill="none" stroke="#69ff94" stroke-width="2.1"/><path d="M46.2 466.4 L39.8 472.4 L42.7 473.6 L41.6 477.4 L48.6 471.3 L45.2 470.1 Z" fill="none" stroke="#f8f8f2" stroke-width="1.0" stroke-linejoin="miter"/><path d="M46.2 526.4 L39.8 532.4 L42.7 533.6 L41.6 537.4 L48.6 531.3 L45.2 530.1 Z" fill="none" stroke="#f8f8f2" stroke-width="1.0" stroke-linejoin="miter"/><path d="M446.4 65.9 L440.3 76.3 L452 76.3 Z" fill="none" stroke="#f8f8f2" stroke-width="1.05" stroke-linejoin="round"/><path d="M446.4 68 V74.8" stroke="#f8f8f2" stroke-width="0.9"/></g></svg>
<div class="t" style="left:19px;top:62px;color:#f8f8f2">socktop — host: debian | CPU Temp: 63.1°C</div>
<div class="t" style="left:479px;top:62px;color:#f8f8f2">(press &#x27;q&#x27; to quit)</div>
<div class="t" style="left:29px;top:82px;color:#f8f8f2">CPU avg (now:   6.9%)</div>
<div class="t" style="left:1009px;top:82px;color:#f8f8f2">Per-core</div>
<div class="t b" style="left:1379px;top:102px;color:#69ff94">cpu0</div>
<div class="t b" style="left:1449px;top:102px;color:#69ff94">11.5%</div>
<div class="t b" style="left:1379px;top:122px;color:#69ff94">cpu1</div>
<div class="t b" style="left:1449px;top:122px;color:#69ff94">17.2%</div>
<div class="t b" style="left:1379px;top:142px;color:#69ff94">cpu2</div>
<div class="t b" style="left:1449px;top:142px;color:#69ff94"> 1.7%</div>
<div class="t b" style="left:1379px;top:162px;color:#69ff94">cpu3</div>
<div class="t b" style="left:1449px;top:162px;color:#69ff94"> 6.8%</div>
<div class="t b" style="left:1379px;top:182px;color:#69ff94">cpu4</div>
<div class="t b" style="left:1449px;top:182px;color:#69ff94"> 3.4%</div>
<div class="t b" style="left:1379px;top:202px;color:#ffffa5">cpu5</div>
<div class="t b" style="left:1449px;top:202px;color:#ffffa5">27.1%</div>
<div class="t b" style="left:1379px;top:222px;color:#69ff94">cpu6</div>
<div class="t b" style="left:1449px;top:222px;color:#69ff94"> 6.9%</div>
<div class="t b" style="left:1379px;top:242px;color:#69ff94">cpu7</div>
<div class="t b" style="left:1449px;top:242px;color:#69ff94"> 3.5%</div>
<div class="t b" style="left:1379px;top:262px;color:#69ff94">cpu8</div>
<div class="t b" style="left:1449px;top:262px;color:#69ff94"> 0.0%</div>
<div class="t b" style="left:1379px;top:282px;color:#69ff94">cpu9</div>
<div class="t b" style="left:1449px;top:282px;color:#69ff94"> 3.3%</div>
<div class="t" style="left:29px;top:322px;color:#f8f8f2">Memory</div>
<div class="t" style="left:689px;top:342px;color:#f8f8f2">17.0GB / 31.2</div>
<div class="t" style="left:819px;top:342px;color:#ff79c6">GB</div>
<div class="t" style="left:29px;top:382px;color:#f8f8f2">Swap</div>
<div class="t" style="left:689px;top:402px;color:#f1fa8c">7.2MB / 977.0MB</div>
<div class="t" style="left:29px;top:442px;color:#f8f8f2">Disks</div>
<div class="t" style="left:69px;top:462px;color:#f8f8f2">/dev/nvme0n1p2   606.5GB / 914.4GB  (66%)</div>
<div class="t" style="left:69px;top:522px;color:#f8f8f2">/dev/nvme0n1p1   5.8MB / 511.0MB  (1%)</div>
<div class="t" style="left:489px;top:482px;color:#f8f8f2">66%</div>
<div class="t" style="left:499px;top:542px;color:#50fa7b">1%</div>
<div class="t" style="left:29px;top:622px;color:#f8f8f2">Download (KB/s) — now: 6 | peak: 108</div>
<div class="t" style="left:29px;top:702px;color:#f8f8f2">Upload (KB/s) — now: 6 | peak: 57</div>
<div class="t" style="left:1009px;top:442px;color:#f8f8f2">Top Processes (2100 total)</div>
<div class="t b" style="left:1009px;top:462px;color:#a4ffff">PID</div>
<div class="t b" style="left:1099px;top:462px;color:#a4ffff">Name</div>
<div class="t b" style="left:1199px;top:462px;color:#a4ffff">CPU %</div>
<div class="t b" style="left:1289px;top:462px;color:#a4ffff">Mem</div>
<div class="t b" style="left:1419px;top:462px;color:#a4ffff">Mem %</div>
<div class="t b" style="left:1009px;top:482px;color:#6b7bb0">2973</div>
<div class="t b" style="left:1099px;top:482px;color:#ffffff">gnome-she</div>
<div class="t b" style="left:1199px;top:482px;color:#69ff94">2.3%</div>
<div class="t b" style="left:1289px;top:482px;color:#ffffff">1.0GB</div>
<div class="t b" style="left:1419px;top:482px;color:#d6acff">3.29%</div>
<div class="t" style="left:1009px;top:502px;color:#6272a4">405898</div>
<div class="t" style="left:1099px;top:502px;color:#f8f8f2">brave</div>
<div class="t" style="left:1199px;top:502px;color:#50fa7b">1.3%</div>
<div class="t" style="left:1289px;top:502px;color:#f8f8f2">513.7MB</div>
<div class="t" style="left:1419px;top:502px;color:#bd93f9">1.61%</div>
<div class="t" style="left:1009px;top:522px;color:#6272a4">477138</div>
<div class="t" style="left:1099px;top:522px;color:#f8f8f2">tokio-run</div>
<div class="t" style="left:1199px;top:522px;color:#50fa7b">1.0%</div>
<div class="t" style="left:1289px;top:522px;color:#f8f8f2">13.0MB</div>
<div class="t" style="left:1419px;top:522px;color:#bd93f9">0.04%</div>
<div class="t" style="left:1009px;top:542px;color:#6272a4">477137</div>
<div class="t" style="left:1099px;top:542px;color:#f8f8f2">socktop_a</div>
<div class="t" style="left:1199px;top:542px;color:#50fa7b">0.7%</div>
<div class="t" style="left:1289px;top:542px;color:#f8f8f2">13.0MB</div>
<div class="t" style="left:1419px;top:542px;color:#bd93f9">0.04%</div>
<div class="t" style="left:1009px;top:562px;color:#6272a4">2756</div>
<div class="t" style="left:1099px;top:562px;color:#f8f8f2">Xorg</div>
<div class="t" style="left:1199px;top:562px;color:#50fa7b">0.6%</div>
<div class="t" style="left:1289px;top:562px;color:#f8f8f2">198.5MB</div>
<div class="t" style="left:1419px;top:562px;color:#bd93f9">0.62%</div>
<div class="t" style="left:1009px;top:582px;color:#6272a4">3780</div>
<div class="t" style="left:1099px;top:582px;color:#f8f8f2">conky</div>
<div class="t" style="left:1199px;top:582px;color:#50fa7b">0.4%</div>
<div class="t" style="left:1289px;top:582px;color:#f8f8f2">80.0MB</div>
<div class="t" style="left:1419px;top:582px;color:#bd93f9">0.25%</div>
<div class="t" style="left:1009px;top:602px;color:#6272a4">3246</div>
<div class="t" style="left:1099px;top:602px;color:#f8f8f2">gdbus</div>
<div class="t" style="left:1199px;top:602px;color:#50fa7b">0.1%</div>
<div class="t" style="left:1289px;top:602px;color:#f8f8f2">15.4MB</div>
<div class="t" style="left:1419px;top:602px;color:#bd93f9">0.05%</div>
<div class="t" style="left:1009px;top:622px;color:#6272a4">3448</div>
<div class="t" style="left:1099px;top:622px;color:#f8f8f2">ibus-engi</div>
<div class="t" style="left:1199px;top:622px;color:#50fa7b">0.1%</div>
<div class="t" style="left:1289px;top:622px;color:#f8f8f2">9.2MB</div>
<div class="t" style="left:1419px;top:622px;color:#bd93f9">0.03%</div>
<div class="t" style="left:1009px;top:642px;color:#6272a4">89212</div>
<div class="t" style="left:1099px;top:642px;color:#f8f8f2">brave</div>
<div class="t" style="left:1199px;top:642px;color:#50fa7b">0.1%</div>
<div class="t" style="left:1289px;top:642px;color:#f8f8f2">298.3MB</div>
<div class="t" style="left:1419px;top:642px;color:#bd93f9">0.93%</div>
<div class="t" style="left:1009px;top:662px;color:#6272a4">355560</div>
<div class="t" style="left:1099px;top:662px;color:#f8f8f2">slack</div>
<div class="t" style="left:1199px;top:662px;color:#50fa7b">0.1%</div>
<div class="t" style="left:1289px;top:662px;color:#f8f8f2">204.0MB</div>
<div class="t" style="left:1419px;top:662px;color:#bd93f9">0.64%</div>
<div class="t" style="left:1009px;top:682px;color:#6272a4">3330</div>
<div class="t" style="left:1099px;top:682px;color:#f8f8f2">gdbus</div>
<div class="t" style="left:1199px;top:682px;color:#50fa7b">0.1%</div>
<div class="t" style="left:1289px;top:682px;color:#f8f8f2">35.6MB</div>
<div class="t" style="left:1419px;top:682px;color:#bd93f9">0.11%</div>
<div class="t" style="left:1009px;top:702px;color:#6272a4">3255</div>
<div class="t" style="left:1099px;top:702px;color:#f8f8f2">ibus-exte</div>
<div class="t" style="left:1199px;top:702px;color:#50fa7b">0.1%</div>
<div class="t" style="left:1289px;top:702px;color:#f8f8f2">35.6MB</div>
<div class="t" style="left:1419px;top:702px;color:#bd93f9">0.11%</div>
<div class="t" style="left:1009px;top:722px;color:#6272a4">3177</div>
<div class="t" style="left:1099px;top:722px;color:#f8f8f2">ibus-daem</div>
<div class="t" style="left:1199px;top:722px;color:#50fa7b">0.1%</div>
<div class="t" style="left:1289px;top:722px;color:#f8f8f2">15.4MB</div>
<div class="t" style="left:1419px;top:722px;color:#bd93f9">0.05%</div>
<div class="t" style="left:1009px;top:742px;color:#6272a4">916</div>
<div class="t" style="left:1099px;top:742px;color:#f8f8f2">irq/87-nv</div>
<div class="t" style="left:1199px;top:742px;color:#50fa7b">0.1%</div>
<div class="t" style="left:1289px;top:742px;color:#f8f8f2">0B</div>
<div class="t" style="left:1419px;top:742px;color:#bd93f9">0.00%</div>
</body></html>
